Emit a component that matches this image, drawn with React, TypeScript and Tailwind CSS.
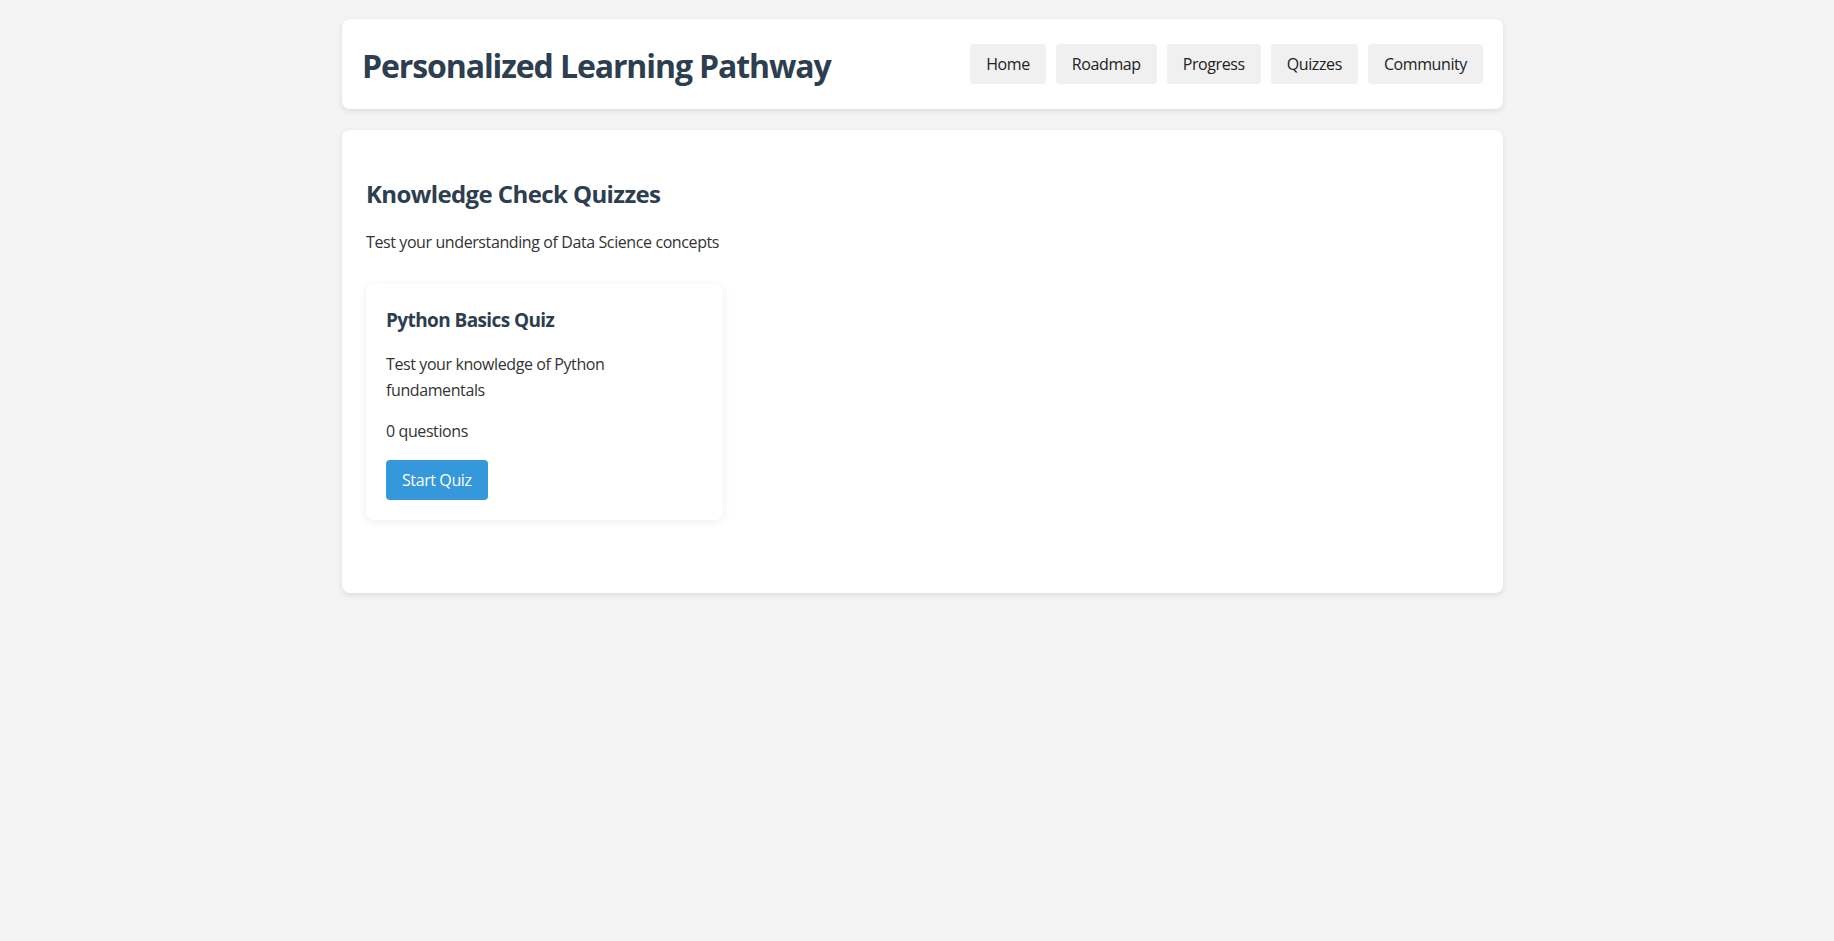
const navItems = ["Home", "Roadmap", "Progress", "Quizzes", "Community"];

export default function App() {
  return (
    <div
      className="min-h-screen bg-[#f4f4f4] pl-[11px] pt-[19px] tracking-[-0.4px]"
      style={{ fontFamily: '"Segoe UI", "Open Sans", "Noto Sans", sans-serif' }}
    >
      <div className="mx-auto w-[1161px]">
        <header className="flex h-[90px] items-center justify-between rounded-lg bg-white px-5 shadow-[0_2px_6px_rgba(0,0,0,0.1)]">
          <h1 className="mt-1 text-[32px] font-bold leading-none tracking-[-1.1px] text-[#2c3e50]">
            Personalized Learning Pathway
          </h1>
          <nav className="flex gap-[10px]">
            {navItems.map((item) => (
              <button
                key={item}
                className="h-[40px] rounded bg-[#f0f0f0] px-4 text-base text-[#222]"
              >
                {item}
              </button>
            ))}
          </nav>
        </header>

        <main className="mt-[21px] h-[463px] rounded-lg bg-white px-6 pt-[48px] shadow-[0_2px_6px_rgba(0,0,0,0.1)]">
          <h2 className="text-2xl font-bold leading-8 tracking-[-0.6px] text-[#2c3e50]">
            Knowledge Check Quizzes
          </h2>
          <p className="mt-5 text-base leading-6 text-[#333]">
            Test your understanding of Data Science concepts
          </p>

          <div className="mt-[30px] grid grid-cols-[357px]">
            <div className="rounded-lg bg-white p-5 shadow-[0_2px_10px_rgba(0,0,0,0.07)]">
              <h3 className="text-[19px] font-bold leading-8 tracking-[-0.6px] text-[#2c3e50]">
                Python Basics Quiz
              </h3>
              <p className="mt-4 max-w-[250px] text-base leading-[25.6px] text-[#333]">
                Test your knowledge of Python fundamentals
              </p>
              <p className="mt-4 text-base leading-[25.6px] text-[#333]">0 questions</p>
              <button className="mt-[15px] h-[40px] rounded bg-[#3498db] px-4 text-base text-white">
                Start Quiz
              </button>
            </div>
          </div>
        </main>
      </div>
    </div>
  );
}
